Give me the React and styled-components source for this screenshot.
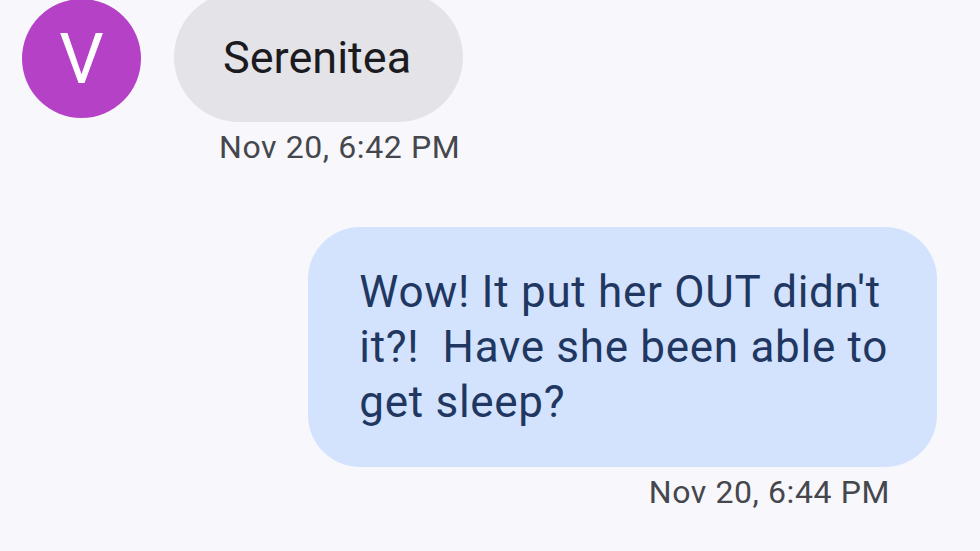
import React from "react";
import { styled, createGlobalStyle } from "styled-components";

const GlobalStyle = createGlobalStyle`
    html, body {
        margin: 0;
        padding: 0;
        background: #f8f7fc;
        font-family: Roboto, "Noto Sans", "Liberation Sans", sans-serif;
    }
`;

const Thread = styled.div`
    width: 980px;
    height: 551px;
    overflow: hidden;
    display: flex;
    flex-direction: column;
`;

const Row = styled.div`
    display: flex;
    align-items: flex-start;
    justify-content: ${(p) => (p.$outgoing ? "flex-end" : "flex-start")};
    margin-top: ${(p) => p.$top}px;
    padding: ${(p) => (p.$outgoing ? "0 43px 0 0" : "0 0 0 22px")};
    gap: 33px;
`;

const Avatar = styled.div`
    width: 119px;
    height: 119px;
    margin-top: 7px;
    border-radius: 50%;
    background: #b441c6;
    color: #ffffff;
    display: flex;
    align-items: center;
    justify-content: center;
    font-size: 70px;
    flex-shrink: 0;
`;

const Group = styled.div`
    display: flex;
    flex-direction: column;
    align-items: ${(p) => (p.$outgoing ? "flex-end" : "flex-start")};
`;

const Bubble = styled.div`
    border-radius: ${(p) => (p.$outgoing ? "52px" : "65px")};
    background: ${(p) => (p.$outgoing ? "#d3e3fd" : "#e3e3e8")};
    color: ${(p) => (p.$outgoing ? "#1f3761" : "#1b1b1f")};
    white-space: pre-wrap;
`;

const ShortBubble = styled(Bubble)`
    height: 130px;
    box-sizing: border-box;
    display: flex;
    align-items: center;
    padding: 0 52px 0 49px;
    font-size: 45px;
`;

const LongBubble = styled(Bubble)`
    padding: 38px 49px 37px 51px;
    font-size: 44px;
    line-height: 55px;
    letter-spacing: 0.7px;
`;

const Stamp = styled.div`
    margin-top: 6px;
    padding: ${(p) => (p.$outgoing ? "0 47px 0 0" : "0 0 0 45px")};
    font-size: 32px;
    letter-spacing: 0.6px;
    color: #45474d;
`;

const App = () => {
    return (
        <Thread>
            <GlobalStyle />
            <Row $top={-8}>
                <Avatar>V</Avatar>
                <Group>
                    <ShortBubble>Serenitea</ShortBubble>
                    <Stamp>Nov 20, 6:42 PM</Stamp>
                </Group>
            </Row>
            <Row $outgoing $top={61}>
                <Group $outgoing>
                    <LongBubble $outgoing>
                        {"Wow! It put her OUT didn't\nit?!  Have she been able to\nget sleep?"}
                    </LongBubble>
                    <Stamp $outgoing>Nov 20, 6:44 PM</Stamp>
                </Group>
            </Row>
        </Thread>
    );
};

export default App;
